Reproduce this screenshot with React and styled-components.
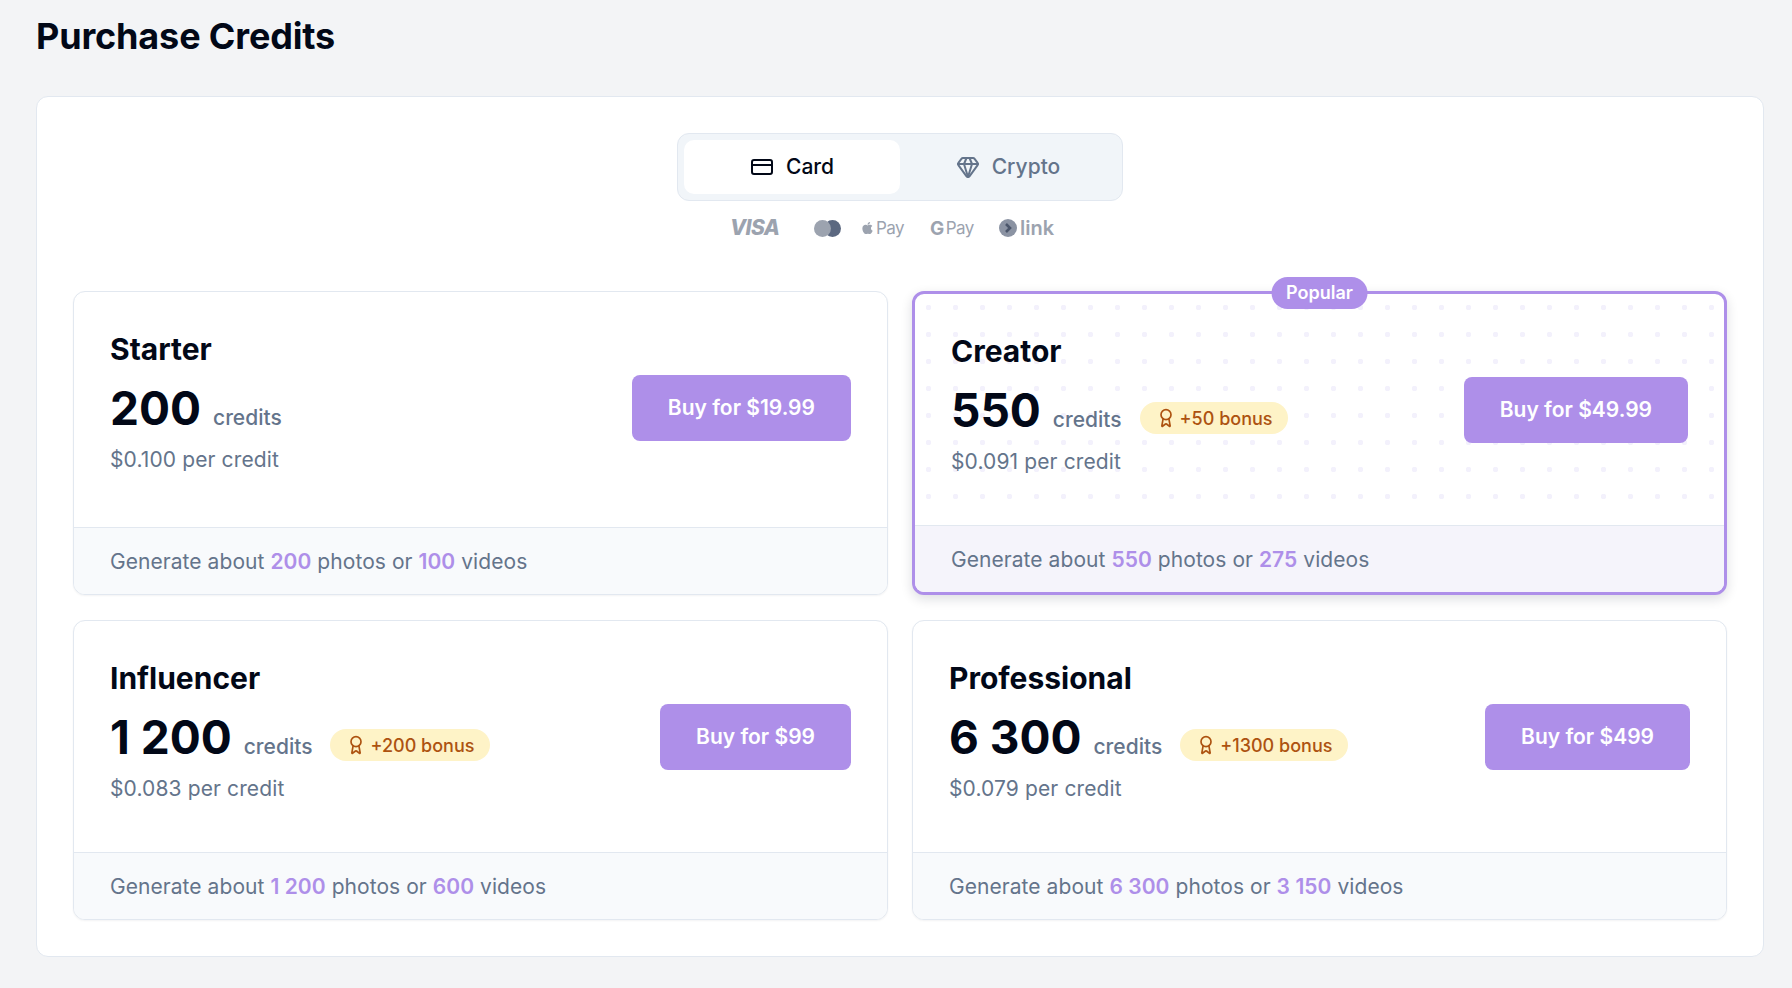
import styled, { createGlobalStyle } from "styled-components";
import { Award, CreditCard, Gem } from "lucide-react";
import { FaApple } from "react-icons/fa";

const Color = {
  Ink: "#020817",
  Muted: "#64748b",
  Border: "#e2e8f0",
  Purple: "#ae8fe9",
  Logo: "#9ca3af",
};

const plans = [
  { name: "Starter", credits: "200", price: "$0.100", buy: "$19.99", photos: "200", videos: "100" },
  { name: "Creator", credits: "550", price: "$0.091", buy: "$49.99", photos: "550", videos: "275", bonus: "+50", popular: true },
  { name: "Influencer", credits: "1 200", price: "$0.083", buy: "$99", photos: "1 200", videos: "600", bonus: "+200" },
  { name: "Professional", credits: "6 300", price: "$0.079", buy: "$499", photos: "6 300", videos: "3 150", bonus: "+1300" },
];

const App = () => {
  return (
    <Page>
      <GlobalStyle />
      <Heading>Purchase Credits</Heading>
      <Panel>
        <Methods>
          <Tabs>
            <Tab $active>
              <CreditCard size={24} strokeWidth={2} />
              Card
            </Tab>
            <Tab>
              <Gem size={24} strokeWidth={2} />
              Crypto
            </Tab>
          </Tabs>
          <Logos>
            <Visa>VISA</Visa>
            <Mastercard viewBox="0 0 27 17" width="27" height="17">
              <circle cx="18.5" cy="8.5" r="8.5" fill="#5b6880" />
              <circle cx="8.5" cy="8.5" r="8.5" fill="#9ca3af" />
            </Mastercard>
            <WalletPay>
              <AppleMark />
              <span>Pay</span>
            </WalletPay>
            <WalletPay>
              <GoogleG>G</GoogleG>
              <span>Pay</span>
            </WalletPay>
            <LinkLogo>
              <svg viewBox="0 0 18 18" width="18" height="18">
                <circle cx="9" cy="9" r="9" fill="#8b93a3" />
                <path d="M7 5l4 4-4 4" fill="none" stroke="#4b566b" strokeWidth="2.6" />
              </svg>
              <span>link</span>
            </LinkLogo>
          </Logos>
        </Methods>
        <PlanGrid>
          {plans.map((plan) => (
            <PlanCard key={plan.name} $popular={plan.popular}>
              {plan.popular ? <PopularBadge>Popular</PopularBadge> : null}
              <PlanBody $popular={plan.popular}>
                <PlanRow>
                  <PlanInfo>
                    <PlanName>{plan.name}</PlanName>
                    <CreditsRow>
                      <CreditsNumber>{plan.credits}</CreditsNumber>
                      <CreditsLabel>credits</CreditsLabel>
                      {plan.bonus ? (
                        <Bonus>
                          <Award size={20} strokeWidth={2} />
                          {plan.bonus} bonus
                        </Bonus>
                      ) : null}
                    </CreditsRow>
                    <PerCredit>{plan.price} per credit</PerCredit>
                  </PlanInfo>
                  <BuyButton>Buy for {plan.buy}</BuyButton>
                </PlanRow>
              </PlanBody>
              <PlanFooter $popular={plan.popular}>
                Generate about <strong>{plan.photos}</strong> photos or{" "}
                <strong>{plan.videos}</strong> videos
              </PlanFooter>
            </PlanCard>
          ))}
        </PlanGrid>
      </Panel>
    </Page>
  );
};

const GlobalStyle = createGlobalStyle`
  * {
    box-sizing: border-box;
  }

  body {
    margin: 0;
    background-color: #f3f4f6;
    font-family: "Inter", "Liberation Sans", sans-serif;
    color: ${Color.Ink};
  }
`;

const Page = styled.div`
  padding: 14px 28px 32px 36px;
  min-height: 988px;
`;

const Heading = styled.h1`
  margin: 0 0 38px;
  font-size: 36px;
  line-height: 44px;
  font-weight: 700;
  letter-spacing: -0.15px;
`;

const Panel = styled.div`
  padding: 36px;
  background-color: #fff;
  border: 1px solid ${Color.Border};
  border-radius: 12px;
`;

const Methods = styled.div`
  display: flex;
  flex-direction: column;
  align-items: center;
`;

const Tabs = styled.div`
  display: flex;
  width: 446px;
  height: 68px;
  padding: 6px;
  background-color: #f1f5f9;
  border: 1px solid ${Color.Border};
  border-radius: 12px;
`;

const Tab = styled.div`
  flex: 1;
  display: flex;
  align-items: center;
  justify-content: center;
  gap: 12px;
  padding-bottom: 1px;
  border-radius: 10px;
  font-size: 21px;
  font-weight: 500;
  color: ${(props) => (props.$active ? Color.Ink : Color.Muted)};
  background-color: ${(props) => (props.$active ? "#fff" : "transparent")};
`;

const Logos = styled.div`
  display: flex;
  align-items: center;
  height: 24px;
  margin: 15px 16px 51px 0;
  color: ${Color.Logo};
`;

const Visa = styled.span`
  width: 46px;
  margin-right: 38px;
  font-size: 21px;
  line-height: 24px;
  font-weight: 800;
  font-style: italic;
  letter-spacing: -0.6px;
`;

const Mastercard = styled.svg`
  margin-right: 20px;
`;

const WalletPay = styled.div`
  display: flex;
  align-items: center;
  gap: 2px;
  width: 41px;
  margin-right: 28px;
  font-size: 17px;
  font-weight: 400;
  letter-spacing: -0.5px;
  white-space: nowrap;
`;

const AppleMark = styled(FaApple)`
  flex-shrink: 0;
  width: 13px;
  height: 14px;
`;

const GoogleG = styled.span`
  font-size: 19px;
  font-weight: 700;
`;

const LinkLogo = styled.div`
  display: flex;
  align-items: center;
  gap: 3px;
  font-size: 20px;
  font-weight: 600;
`;

const PlanGrid = styled.div`
  display: grid;
  grid-template-columns: 1fr 1fr;
  gap: 25px 24px;
`;

const PlanCard = styled.div`
  position: relative;
  display: flex;
  flex-direction: column;
  background-color: #fff;
  border: ${(props) => (props.$popular ? `3px solid ${Color.Purple}` : `1px solid ${Color.Border}`)};
  border-radius: 12px;
  box-shadow: ${(props) =>
    props.$popular ? "0 4px 12px rgba(15, 23, 42, 0.14)" : "0 1px 2px rgba(15, 23, 42, 0.05)"};
`;

const PopularBadge = styled.div`
  position: absolute;
  z-index: 1;
  top: -17px;
  left: 50%;
  transform: translateX(-50%);
  height: 32px;
  padding: 0 15px;
  border-radius: 16px;
  background-color: ${Color.Purple};
  color: #fff;
  font-size: 18px;
  line-height: 31px;
  font-weight: 600;
`;

const PlanBody = styled.div`
  position: relative;
  flex: 1;
  padding: 36px;

  &::before {
    content: "";
    display: ${(props) => (props.$popular ? "block" : "none")};
    position: absolute;
    top: 0;
    left: 0;
    right: 0;
    bottom: 16px;
    background-image: radial-gradient(circle, #f3f1fc 2.5px, transparent 3px);
    background-size: 27px 27px;
  }
`;

const PlanRow = styled.div`
  position: relative;
  display: flex;
  align-items: center;
  justify-content: space-between;
  height: 159px;
`;

const PlanInfo = styled.div`
  align-self: flex-start;
  margin-top: 2px;
`;

const PlanName = styled.div`
  font-size: 30px;
  line-height: 38px;
  font-weight: 700;
`;

const CreditsRow = styled.div`
  display: flex;
  align-items: baseline;
  margin-top: 10px;
`;

const CreditsNumber = styled.span`
  font-size: 46px;
  line-height: 60px;
  font-weight: 700;
  margin-right: 12px;
`;

const CreditsLabel = styled.span`
  font-size: 21px;
  font-weight: 500;
  color: ${Color.Muted};
  margin-right: 18px;
`;

const Bonus = styled.span`
  display: inline-flex;
  align-items: center;
  gap: 4px;
  height: 32px;
  padding: 0 16px;
  border-radius: 16px;
  background-color: #fef3c7;
  color: #ad5210;
  font-size: 18px;
  font-weight: 500;
  align-self: center;
  margin-top: 16px;
`;

const PerCredit = styled.div`
  margin-top: 8px;
  font-size: 21px;
  line-height: 28px;
  letter-spacing: 0.12px;
  color: ${Color.Muted};
`;

const BuyButton = styled.button`
  height: 66px;
  padding: 0 36px;
  border: none;
  border-radius: 8px;
  background-color: ${Color.Purple};
  color: #fff;
  font-family: inherit;
  font-size: 21px;
  font-weight: 600;
`;

const PlanFooter = styled.div`
  padding: 20px 36px 19px;
  background-color: ${(props) => (props.$popular ? "#f5f4fb" : "#f8fafc")};
  border-top: 1px solid ${Color.Border};
  border-radius: 0 0 ${(props) => (props.$popular ? "9px 9px" : "11px 11px")};
  font-size: 21px;
  line-height: 27px;
  letter-spacing: 0.06px;
  color: ${Color.Muted};

  strong {
    font-weight: 600;
    color: ${Color.Purple};
  }
`;

export default App;
